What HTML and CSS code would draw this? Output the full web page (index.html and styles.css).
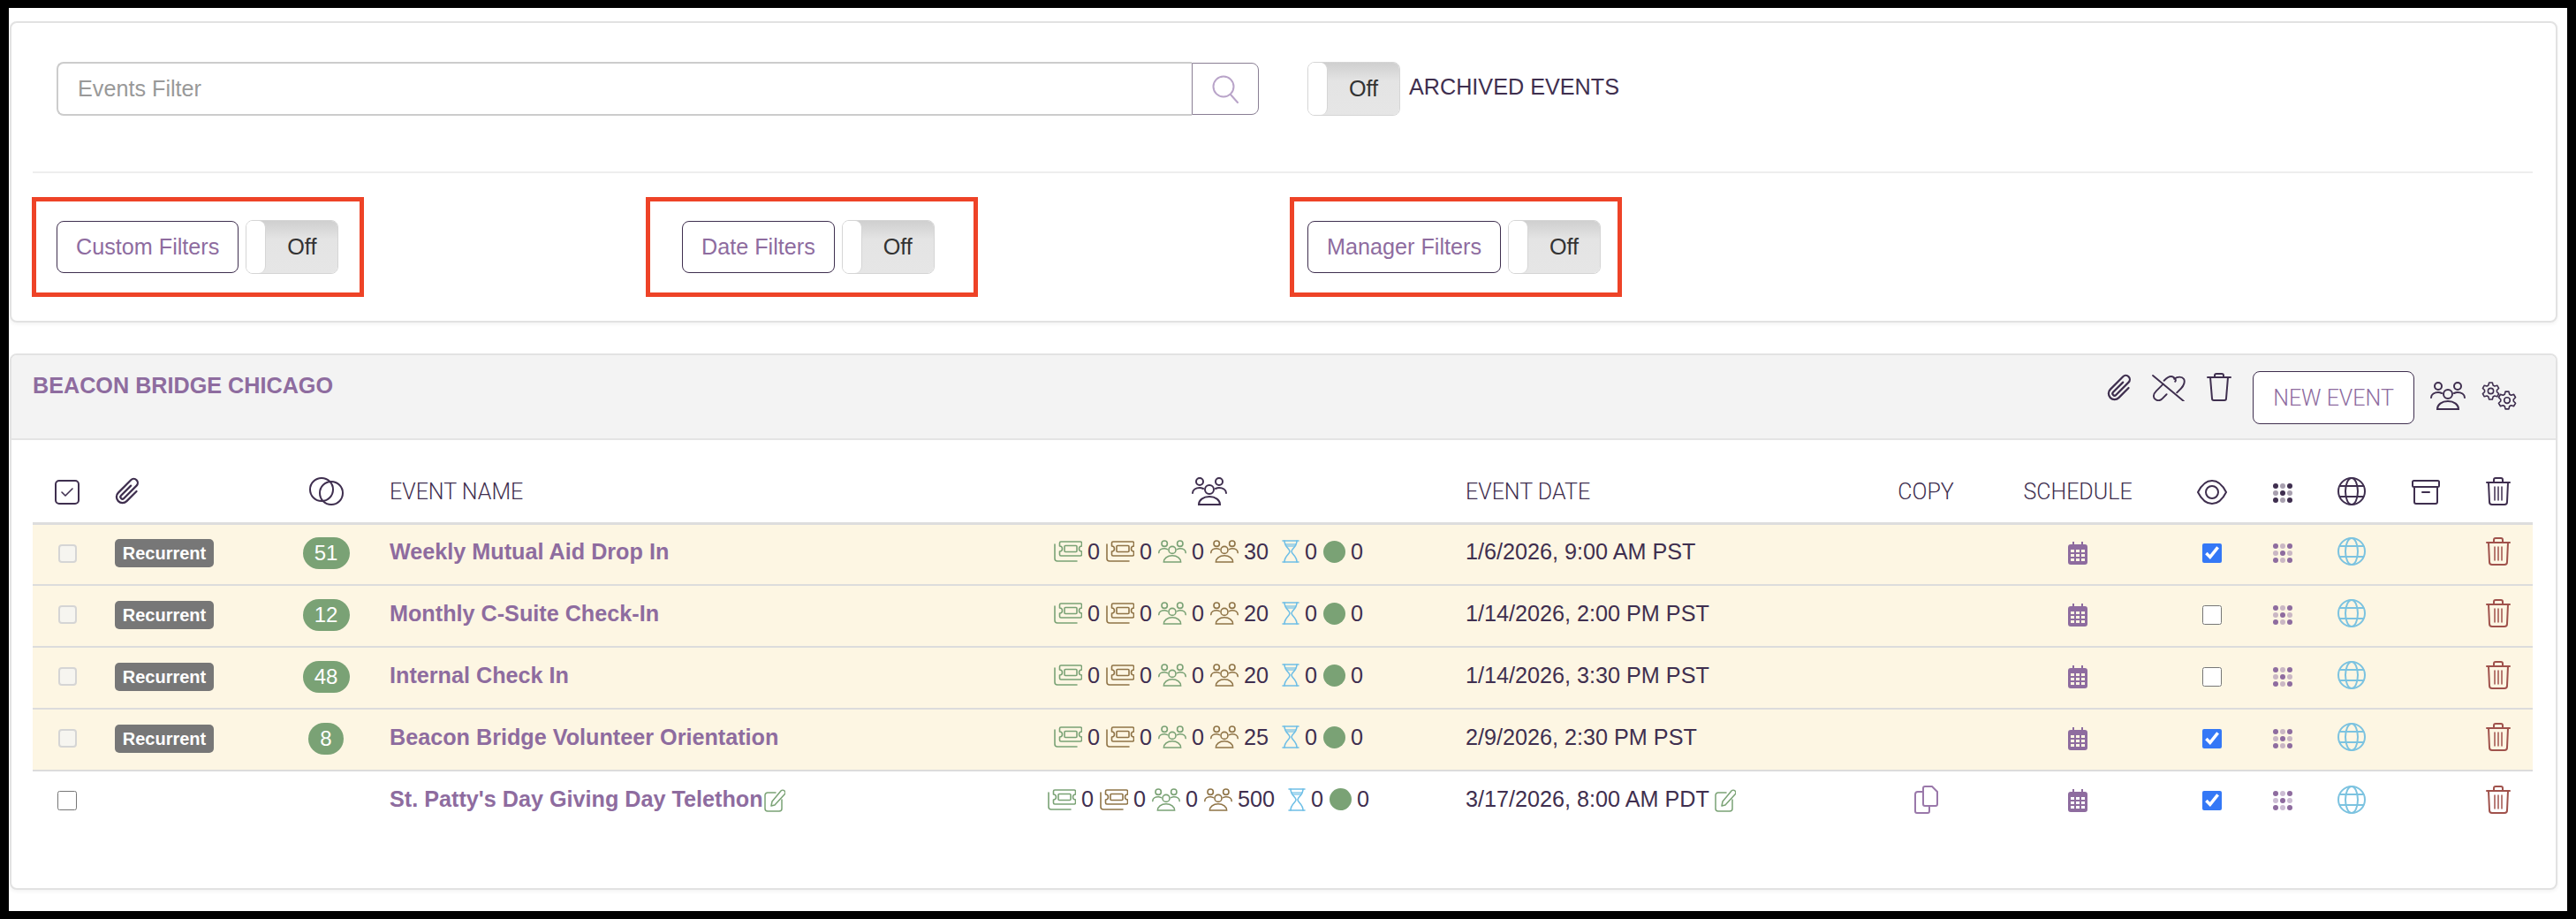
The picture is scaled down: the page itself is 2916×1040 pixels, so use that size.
FILE: index.html
```html
<!DOCTYPE html>
<html lang="en">
  <head>
    <meta charset="UTF-8" />
    <title>Events</title>
    <link rel="stylesheet" href="styles.css">
  </head>
  <body>
    <!-- icon sprite -->
    <svg class="sprite" xmlns="http://www.w3.org/2000/svg">
      <symbol id="i-clip" viewBox="0 0 16 16">
        <path fill="currentColor" transform="rotate(45 8 8)" d="M4.5 3a2.5 2.5 0 0 1 5 0v9a1.5 1.5 0 0 1-3 0V5a.5.5 0 0 1 1 0v7a.5.5 0 0 0 1 0V3a1.5 1.5 0 1 0-3 0v9a2.5 2.5 0 0 0 5 0V5a.5.5 0 0 1 1 0v7a3.5 3.5 0 1 1-7 0z"/>
      </symbol>
      <symbol id="i-unlink" viewBox="0 0 40 32">
        <g fill="none" stroke="currentColor" stroke-width="2" stroke-linecap="round">
          <path d="M2 2l36 30"/>
          <path d="M14 12l-8 8c-4 4-4 8-1 10s6 1 8-1l5-5"/>
          <path d="M15 8c4-4 8-6 11-4s3 4 2 5"/>
          <path d="M27 6c4-3 9-3 11 0s0 8-3 11l-5 5"/>
        </g>
      </symbol>
      <symbol id="i-trash-plain" viewBox="0 0 28 32">
        <g fill="none" stroke="currentColor" stroke-width="2" stroke-linejoin="round" stroke-linecap="round">
          <path d="M1 5h26"/>
          <path d="M9 5V3a2 2 0 0 1 2-2h6a2 2 0 0 1 2 2v2"/>
          <path d="M4 5l2 24a2 2 0 0 0 2 2h12a2 2 0 0 0 2-2l2-24"/>
        </g>
      </symbol>
      <symbol id="i-trash" viewBox="0 0 28 32">
        <g fill="none" stroke="currentColor" stroke-width="2" stroke-linejoin="round" stroke-linecap="round">
          <path d="M1 6h26"/>
          <path d="M9 6V3a2 2 0 0 1 2-2h6a2 2 0 0 1 2 2v3"/>
          <path d="M3 6l1 22a3 3 0 0 0 3 3h14a3 3 0 0 0 3-3l1-22"/>
          <path d="M10 11v15M14 11v15M18 11v15" stroke-width="1.5"/>
        </g>
      </symbol>
      <symbol id="i-group" viewBox="0 0 40 32">
        <g fill="none" stroke="currentColor" stroke-width="2" stroke-linecap="round">
          <circle cx="9" cy="5" r="4"/>
          <circle cx="31" cy="5" r="4"/>
          <circle cx="20" cy="14" r="5"/>
          <path d="M1 18c0-4 4-6 8-6 2 0 3 .5 4 1"/>
          <path d="M39 18c0-4-4-6-8-6-2 0-3 .5-4 1"/>
          <path d="M8 31c0-5 5-9 12-9s12 4 12 9z"/>
        </g>
      </symbol>
      <symbol id="i-gear" viewBox="0 0 24 24">
        <polygon fill="none" stroke="currentColor" stroke-width="1.8" stroke-linejoin="round" points="9,4.58 9.9,1.2 14.1,1.2 15,4.58 16.93,5.69 20.3,4.78 22.4,8.42 19.93,10.89 19.93,13.11 22.4,15.58 20.3,19.22 16.93,18.31 15,19.42 14.1,22.8 9.9,22.8 9,19.42 7.07,18.31 3.7,19.22 1.6,15.58 4.07,13.11 4.07,10.89 1.6,8.42 3.7,4.78 7.07,5.69"/>
        <circle cx="12" cy="12" r="3.6" fill="none" stroke="currentColor" stroke-width="1.8"/>
      </symbol>
      <symbol id="i-gears" viewBox="0 0 40 32">
        <use href="#i-gear" x="0" y="0" width="21" height="21"/>
        <use href="#i-gear" x="18" y="10" width="22" height="22"/>
      </symbol>
      <symbol id="i-check-square" viewBox="0 0 28 28">
        <rect x="1" y="1" width="26" height="26" rx="4" fill="none" stroke="currentColor" stroke-width="2"/>
        <path d="M8 14l4 4 8-8" fill="none" stroke="currentColor" stroke-width="1.6" stroke-linecap="round" stroke-linejoin="round"/>
      </symbol>
      <symbol id="i-circles" viewBox="0 0 39 32">
        <g fill="none" stroke="currentColor" stroke-width="2">
          <circle cx="14" cy="14" r="13"/>
          <circle cx="25" cy="18" r="13"/>
        </g>
      </symbol>
      <symbol id="i-eye" viewBox="0 0 34 28">
        <g fill="none" stroke="currentColor" stroke-width="2">
          <path d="M1 14C5 6 11 1 17 1s12 5 16 13c-4 8-10 13-16 13S5 22 1 14z"/>
          <circle cx="17" cy="14" r="7"/>
        </g>
      </symbol>
      <symbol id="i-dots" viewBox="0 0 22 22">
        <g fill="currentColor">
          <circle cx="3" cy="3" r="3"/><circle cx="19" cy="3" r="3"/>
          <circle cx="11" cy="11" r="3"/>
          <circle cx="3" cy="19" r="3"/><circle cx="19" cy="19" r="3"/>
          <g opacity=".45">
            <circle cx="11" cy="3" r="3"/><circle cx="3" cy="11" r="3"/>
            <circle cx="19" cy="11" r="3"/><circle cx="11" cy="19" r="3"/>
          </g>
        </g>
      </symbol>
      <symbol id="i-globe" viewBox="0 0 32 32">
        <g fill="none" stroke="currentColor" stroke-width="2">
          <circle cx="16" cy="16" r="15"/>
          <ellipse cx="16" cy="16" rx="7" ry="15"/>
          <path d="M2.5 10h27M2.5 22h27"/>
        </g>
      </symbol>
      <symbol id="i-archive" viewBox="0 0 32 28">
        <g fill="none" stroke="currentColor" stroke-width="2" stroke-linecap="round" stroke-linejoin="round">
          <rect x="1" y="1" width="30" height="7" rx="1.5"/>
          <path d="M3 8v17a2 2 0 0 0 2 2h22a2 2 0 0 0 2-2V8"/>
          <path d="M12 14h8"/>
        </g>
      </symbol>
      <symbol id="i-ticket" viewBox="0 0 32 24">
        <g fill="none" stroke="currentColor" stroke-width="1.6" stroke-linejoin="round" stroke-linecap="round">
          <path d="M8 1h22a1.5 1.5 0 0 1 1.5 1.500V6a3 3 0 0 0 0 6v3.500A1.500 1.500 0 0 1 30 17H8a1.500 1.500 0 0 1-1.500-1.500V12a3 3 0 0 0 0-6V2.500A1.500 1.500 0 0 1 8 1z"/>
          <rect x="12" y="5.500" width="14" height="7" rx="1"/>
          <path d="M1 4v16a3 3 0 0 0 3 3h22"/>
        </g>
      </symbol>
      <symbol id="i-hourglass" viewBox="0 0 20 26">
        <path d="M3.500 4h13c-.5 2-2 3-3 4h-7c-1-1-2.500-2-3-4z" fill="currentColor" opacity=".6"/>
        <g fill="none" stroke="currentColor" stroke-width="1.6" stroke-linecap="round">
          <path d="M1 1h18M1 25h18"/>
          <path d="M3 1c0 7 6 9 6 12s-6 5-6 12"/>
          <path d="M17 1c0 7-6 9-6 12s6 5 6 12"/>
        </g>
      </symbol>
      <symbol id="i-calendar" viewBox="0 0 22 26">
        <path fill="currentColor" fill-rule="evenodd" d="M5 0h2v3h8V0h2v3h2a3 3 0 0 1 3 3v17a3 3 0 0 1-3 3H3a3 3 0 0 1-3-3V6a3 3 0 0 1 3-3h2zM3 9v3h4V9zm6 0v3h4V9zm6 0v3h4V9zM3 14v3h4v-3zm6 0v3h4v-3zm6 0v3h4v-3zM3 19v3h4v-3zm6 0v3h4v-3zm6 0v3h4v-3z"/>
      </symbol>
      <symbol id="i-edit" viewBox="0 0 24 26">
        <g fill="none" stroke="currentColor" stroke-width="1.500" stroke-linejoin="round" stroke-linecap="round">
          <path d="M13 4H4a3 3 0 0 0-3 3v15a3 3 0 0 0 3 3h13a3 3 0 0 0 3-3V12"/>
          <path d="M8 19l1-5L19 2c1-1 3-1 4 0s1 3 0 4L12 18z"/>
        </g>
      </symbol>
      <symbol id="i-copy" viewBox="0 0 27 32">
        <g fill="none" stroke="currentColor" stroke-width="2" stroke-linejoin="round">
          <path d="M10 3a2 2 0 0 1 2-2h8l6 6v14a2 2 0 0 1-2 2H12a2 2 0 0 1-2-2z"/>
          <path d="M10 7H4a3 3 0 0 0-3 3v19a2 2 0 0 0 2 2h12a2 2 0 0 0 2-2v-6"/>
        </g>
      </symbol>
      <symbol id="i-search" viewBox="0 0 30 32">
        <g fill="none" stroke="currentColor" stroke-width="2" stroke-linecap="round">
          <circle cx="13" cy="13" r="11.500"/>
          <path d="M21 22l8 9"/>
        </g>
      </symbol>
    </svg>

    <div class="frame">
      <section class="card filters">
        <div class="search-row">
          <div class="search-box">
            <input type="text" class="search-input" placeholder="Events Filter" />
            <button type="button" class="btn-search"><svg class="icon-search"><use href="#i-search"/></svg></button>
          </div>
          <div class="switch">
            <span class="switch-handle"></span>
            <span class="switch-label">Off</span>
          </div>
          <span class="archived-label">ARCHIVED EVENTS</span>
        </div>

        <div class="filter-row">
          <div class="filter-box filter-custom">
            <button type="button" class="btn btn-filter">Custom Filters</button>
            <div class="switch">
              <span class="switch-handle"></span>
              <span class="switch-label">Off</span>
            </div>
          </div>
          <div class="filter-box filter-date">
            <button type="button" class="btn btn-filter">Date Filters</button>
            <div class="switch">
              <span class="switch-handle"></span>
              <span class="switch-label">Off</span>
            </div>
          </div>
          <div class="filter-box filter-manager">
            <button type="button" class="btn btn-filter">Manager Filters</button>
            <div class="switch">
              <span class="switch-handle"></span>
              <span class="switch-label">Off</span>
            </div>
          </div>
        </div>
      </section>

      <section class="card events">
        <header class="events-head">
          <h2 class="events-title">BEACON BRIDGE CHICAGO</h2>
          <div class="events-tools">
            <svg class="tool-clip"><use href="#i-clip"/></svg>
            <svg class="tool-unlink"><use href="#i-unlink"/></svg>
            <svg class="tool-trash"><use href="#i-trash-plain"/></svg>
            <button type="button" class="btn btn-new">NEW EVENT</button>
            <svg class="tool-group"><use href="#i-group"/></svg>
            <svg class="tool-gears"><use href="#i-gears"/></svg>
          </div>
        </header>

        <table class="events-table">
          <thead>
            <tr>
              <th class="col-check"><svg class="ic-28"><use href="#i-check-square"/></svg></th>
              <th class="col-clip"><svg class="ic-clip"><use href="#i-clip"/></svg></th>
              <th class="col-count"><svg class="ic-circles"><use href="#i-circles"/></svg></th>
              <th class="col-name">EVENT NAME</th>
              <th class="col-stats"><svg class="ic-group"><use href="#i-group"/></svg></th>
              <th class="col-date">EVENT DATE</th>
              <th class="col-copy">COPY</th>
              <th class="col-schedule">SCHEDULE</th>
              <th class="col-eye"><svg class="ic-eye"><use href="#i-eye"/></svg></th>
              <th class="col-dots"><svg class="ic-dots"><use href="#i-dots"/></svg></th>
              <th class="col-globe"><svg class="ic-globe"><use href="#i-globe"/></svg></th>
              <th class="col-archive"><svg class="ic-archive"><use href="#i-archive"/></svg></th>
              <th class="col-trash"><svg class="ic-trash"><use href="#i-trash"/></svg></th>
            </tr>
          </thead>
          <tbody>
            <tr class="row-recurrent">
              <td class="col-check"><input type="checkbox" class="check-muted" disabled /></td>
              <td class="col-clip"><span class="badge">Recurrent</span></td>
              <td class="col-count"><span class="pill pill-wide">51</span></td>
              <td class="col-name"><a class="event-link">Weekly Mutual Aid Drop In</a></td>
              <td class="col-stats">
                <div class="stats">
                  <svg class="st-ticket green"><use href="#i-ticket"/></svg><span>0</span>
                  <svg class="st-ticket brown"><use href="#i-ticket"/></svg><span>0</span>
                  <svg class="st-group green"><use href="#i-group"/></svg><span>0</span>
                  <svg class="st-group brown"><use href="#i-group"/></svg><span>30</span>
                  <svg class="st-hourglass"><use href="#i-hourglass"/></svg><span>0</span>
                  <i class="st-dot"></i><span>0</span>
                </div>
              </td>
              <td class="col-date">1/6/2026, 9:00 AM PST</td>
              <td class="col-copy"></td>
              <td class="col-schedule"><svg class="ic-calendar"><use href="#i-calendar"/></svg></td>
              <td class="col-eye"><input type="checkbox" class="check" checked /></td>
              <td class="col-dots"><svg class="ic-dots purple"><use href="#i-dots"/></svg></td>
              <td class="col-globe"><svg class="ic-globe sky"><use href="#i-globe"/></svg></td>
              <td class="col-archive"></td>
              <td class="col-trash"><svg class="ic-trash red"><use href="#i-trash"/></svg></td>
            </tr>
            <tr class="row-recurrent">
              <td class="col-check"><input type="checkbox" class="check-muted" disabled /></td>
              <td class="col-clip"><span class="badge">Recurrent</span></td>
              <td class="col-count"><span class="pill pill-wide">12</span></td>
              <td class="col-name"><a class="event-link">Monthly C-Suite Check-In</a></td>
              <td class="col-stats">
                <div class="stats">
                  <svg class="st-ticket green"><use href="#i-ticket"/></svg><span>0</span>
                  <svg class="st-ticket brown"><use href="#i-ticket"/></svg><span>0</span>
                  <svg class="st-group green"><use href="#i-group"/></svg><span>0</span>
                  <svg class="st-group brown"><use href="#i-group"/></svg><span>20</span>
                  <svg class="st-hourglass"><use href="#i-hourglass"/></svg><span>0</span>
                  <i class="st-dot"></i><span>0</span>
                </div>
              </td>
              <td class="col-date">1/14/2026, 2:00 PM PST</td>
              <td class="col-copy"></td>
              <td class="col-schedule"><svg class="ic-calendar"><use href="#i-calendar"/></svg></td>
              <td class="col-eye"><input type="checkbox" class="check" /></td>
              <td class="col-dots"><svg class="ic-dots purple"><use href="#i-dots"/></svg></td>
              <td class="col-globe"><svg class="ic-globe sky"><use href="#i-globe"/></svg></td>
              <td class="col-archive"></td>
              <td class="col-trash"><svg class="ic-trash red"><use href="#i-trash"/></svg></td>
            </tr>
            <tr class="row-recurrent">
              <td class="col-check"><input type="checkbox" class="check-muted" disabled /></td>
              <td class="col-clip"><span class="badge">Recurrent</span></td>
              <td class="col-count"><span class="pill pill-wide">48</span></td>
              <td class="col-name"><a class="event-link">Internal Check In</a></td>
              <td class="col-stats">
                <div class="stats">
                  <svg class="st-ticket green"><use href="#i-ticket"/></svg><span>0</span>
                  <svg class="st-ticket brown"><use href="#i-ticket"/></svg><span>0</span>
                  <svg class="st-group green"><use href="#i-group"/></svg><span>0</span>
                  <svg class="st-group brown"><use href="#i-group"/></svg><span>20</span>
                  <svg class="st-hourglass"><use href="#i-hourglass"/></svg><span>0</span>
                  <i class="st-dot"></i><span>0</span>
                </div>
              </td>
              <td class="col-date">1/14/2026, 3:30 PM PST</td>
              <td class="col-copy"></td>
              <td class="col-schedule"><svg class="ic-calendar"><use href="#i-calendar"/></svg></td>
              <td class="col-eye"><input type="checkbox" class="check" /></td>
              <td class="col-dots"><svg class="ic-dots purple"><use href="#i-dots"/></svg></td>
              <td class="col-globe"><svg class="ic-globe sky"><use href="#i-globe"/></svg></td>
              <td class="col-archive"></td>
              <td class="col-trash"><svg class="ic-trash red"><use href="#i-trash"/></svg></td>
            </tr>
            <tr class="row-recurrent">
              <td class="col-check"><input type="checkbox" class="check-muted" disabled /></td>
              <td class="col-clip"><span class="badge">Recurrent</span></td>
              <td class="col-count"><span class="pill">8</span></td>
              <td class="col-name"><a class="event-link">Beacon Bridge Volunteer Orientation</a></td>
              <td class="col-stats">
                <div class="stats">
                  <svg class="st-ticket green"><use href="#i-ticket"/></svg><span>0</span>
                  <svg class="st-ticket brown"><use href="#i-ticket"/></svg><span>0</span>
                  <svg class="st-group green"><use href="#i-group"/></svg><span>0</span>
                  <svg class="st-group brown"><use href="#i-group"/></svg><span>25</span>
                  <svg class="st-hourglass"><use href="#i-hourglass"/></svg><span>0</span>
                  <i class="st-dot"></i><span>0</span>
                </div>
              </td>
              <td class="col-date">2/9/2026, 2:30 PM PST</td>
              <td class="col-copy"></td>
              <td class="col-schedule"><svg class="ic-calendar"><use href="#i-calendar"/></svg></td>
              <td class="col-eye"><input type="checkbox" class="check" checked /></td>
              <td class="col-dots"><svg class="ic-dots purple"><use href="#i-dots"/></svg></td>
              <td class="col-globe"><svg class="ic-globe sky"><use href="#i-globe"/></svg></td>
              <td class="col-archive"></td>
              <td class="col-trash"><svg class="ic-trash red"><use href="#i-trash"/></svg></td>
            </tr>
            <tr>
              <td class="col-check"><input type="checkbox" class="check" /></td>
              <td class="col-clip"></td>
              <td class="col-count"></td>
              <td class="col-name"><a class="event-link">St. Patty's Day Giving Day Telethon</a><svg class="ic-edit"><use href="#i-edit"/></svg></td>
              <td class="col-stats">
                <div class="stats">
                  <svg class="st-ticket green"><use href="#i-ticket"/></svg><span>0</span>
                  <svg class="st-ticket brown"><use href="#i-ticket"/></svg><span>0</span>
                  <svg class="st-group green"><use href="#i-group"/></svg><span>0</span>
                  <svg class="st-group brown"><use href="#i-group"/></svg><span>500</span>
                  <svg class="st-hourglass"><use href="#i-hourglass"/></svg><span>0</span>
                  <i class="st-dot"></i><span>0</span>
                </div>
              </td>
              <td class="col-date">3/17/2026, 8:00 AM PDT<svg class="ic-edit"><use href="#i-edit"/></svg></td>
              <td class="col-copy"><svg class="ic-copy"><use href="#i-copy"/></svg></td>
              <td class="col-schedule"><svg class="ic-calendar"><use href="#i-calendar"/></svg></td>
              <td class="col-eye"><input type="checkbox" class="check" checked /></td>
              <td class="col-dots"><svg class="ic-dots purple"><use href="#i-dots"/></svg></td>
              <td class="col-globe"><svg class="ic-globe sky"><use href="#i-globe"/></svg></td>
              <td class="col-archive"></td>
              <td class="col-trash"><svg class="ic-trash red"><use href="#i-trash"/></svg></td>
            </tr>
          </tbody>
        </table>
      </section>
    </div>
  </body>
</html>
```

FILE: styles.css
```css
* {
  box-sizing: border-box;
}

html,
body {
  margin: 0;
  padding: 0;
}

body {
  background: #000;
  color: #3f2f4f;
  font-family: "Liberation Sans", Arial, sans-serif;
  font-size: 25.2px;
  padding: 9px 10px;
}

.sprite {
  position: absolute;
  width: 0;
  height: 0;
}

.frame {
  background: #fff;
  height: 1022px;
  padding: 15px 11px 0 1px;
}

.card {
  background: #fff;
  border: 2px solid #e2e2e2;
  border-radius: 8px;
  box-shadow: 0 2px 4px rgba(0, 0, 0, 0.05);
}

/* filter card */
.filters {
  height: 341px;
  padding: 44px 26px 0 24px;
}

.search-row {
  display: flex;
  align-items: flex-start;
  padding: 0 0 63px 27px;
  border-bottom: 2px solid #eee;
}

.search-box {
  display: flex;
  width: 1361px;
  margin-right: 55px;
}

.search-input {
  width: 1285px;
  height: 61px;
  padding: 0 22px;
  border: 2px solid #ccc;
  border-right: 0;
  border-radius: 8px 0 0 8px;
  font-family: inherit;
  font-size: 25.2px;
  color: #3f2f4f;
}

.search-input::placeholder {
  color: #999;
}

.btn-search {
  width: 76px;
  height: 59px;
  margin-top: 1px;
  padding: 0;
  background: #fff;
  border: 1px solid #8a7f94;
  border-radius: 0 8px 8px 0;
}

.icon-search {
  display: block;
  width: 30px;
  height: 32px;
  margin: 0 auto;
  color: #b9a4c9;
}

.switch {
  display: flex;
  width: 105px;
  height: 61px;
  border: 1px solid #d5d5d5;
  border-radius: 8px;
  overflow: hidden;
  flex: none;
}

.switch-handle {
  width: 22px;
  background: #fff;
  border-right: 1px solid #d5d5d5;
  border-radius: 0 8px 8px 0;
  position: relative;
  z-index: 1;
  margin-right: -6px;
}

.switch-label {
  flex: 1;
  display: flex;
  align-items: center;
  justify-content: center;
  padding-left: 6px;
  color: #333;
  background: linear-gradient(#cfcfcf, #e4e4e4 35%, #e6e6e6);
}

.archived-label {
  margin: 13px 0 0 10px;
  line-height: 30px;
}

.filter-row {
  display: flex;
  padding-top: 27px;
  margin-left: -1px;
}

.filter-box {
  display: flex;
  align-items: center;
  gap: 8px;
  width: 376px;
  height: 113px;
  border: 5px solid #ee4327;
}

.filter-custom {
  padding-left: 23px;
}

.filter-date {
  margin-left: 319px;
  padding-left: 36px;
}

.filter-manager {
  margin-left: 353px;
  padding-left: 15px;
}

.btn {
  background: #fff;
  border: 1px solid #3f2f4f;
  border-radius: 8px;
  color: #8e6c9f;
  font-family: inherit;
}

.btn-filter {
  height: 59px;
  padding: 0 21px;
  font-size: 25.2px;
}

/* events card */
.events {
  height: 607px;
  margin-top: 35px;
  overflow: hidden;
}

.events-head {
  display: flex;
  justify-content: space-between;
  height: 96px;
  padding: 19px 44px 0 24px;
  background: #f3f3f3;
  border-bottom: 2px solid #e4e4e4;
}

.events-title {
  margin: 0;
  color: #8e6c9f;
  font-size: 25.2px;
  font-weight: bold;
  line-height: 30px;
}

.events-tools {
  display: flex;
  align-items: flex-start;
  color: #3f2f4f;
}

.tool-clip {
  width: 36px;
  height: 36px;
  margin: 0 17px 0 0;
}

.tool-unlink {
  width: 39px;
  height: 31px;
  margin: 2px 24px 0 0;
}

.tool-trash {
  width: 28px;
  height: 32px;
  margin: 1px 24px 0 0;
}

.btn-new {
  width: 183px;
  height: 60px;
  margin: -1px 18px 0 0;
  padding: 0;
  font-family: Roboto, sans-serif;
  font-size: 25px;
  font-weight: 300;
}

.tool-group {
  width: 40px;
  height: 32px;
  margin: 11px 18px 0 0;
}

.tool-gears {
  width: 40px;
  height: 32px;
  margin-top: 11px;
}

.events-table {
  width: 2830px;
  margin: 24px 0 0 24px;
  border-collapse: collapse;
  table-layout: fixed;
}

.events-table th {
  height: 70px;
  padding: 0;
  border-bottom: 3px solid #ddd;
  font-family: Roboto, sans-serif;
  font-size: 25px;
  font-weight: 300;
  text-align: center;
}

.events-table td {
  height: 70px;
  padding: 0 0 6px;
  border-bottom: 2px solid #dcdcdc;
  text-align: center;
}

.events-table tr:last-child td {
  border-bottom: 0;
}

.events-table svg {
  vertical-align: middle;
}

.row-recurrent {
  background: #fdf6e3;
}

.col-check { width: 78px; }
.col-clip { width: 192px; }
.col-count { width: 124px; }
.col-name { width: 657px; }
.col-stats { width: 561px; }
.col-date { width: 468px; }
.col-copy { width: 126px; }
.col-schedule { width: 218px; }
.col-eye { width: 86px; }
.col-dots { width: 74px; }
.col-globe { width: 82px; }
.col-archive { width: 86px; }
.col-trash { width: 78px; }

.events-table .col-clip {
  padding-left: 15px;
  text-align: left;
}

.events-table td.col-clip,
.events-table td.col-count {
  padding-bottom: 2px;
}

.events-table .col-name,
.events-table .col-date {
  padding-left: 10px;
  text-align: left;
}

.ic-28 { width: 28px; height: 28px; }
.ic-clip { width: 36px; height: 36px; margin-left: -3px; }
.ic-circles { width: 39px; height: 32px; }
.ic-group { width: 40px; height: 32px; }
.ic-eye { width: 34px; height: 28px; }
.ic-dots { width: 22px; height: 22px; }
.ic-globe { width: 32px; height: 32px; }
.ic-archive { width: 32px; height: 28px; }
.ic-trash { width: 28px; height: 32px; }
.ic-calendar { width: 22px; height: 26px; color: #8e6c9f; }
.ic-copy { width: 27px; height: 32px; color: #9a78aa; }
.ic-edit { width: 24px; height: 26px; margin-left: 1px; color: #7aa275; }
.col-date .ic-edit { margin-left: 6px; }

.purple { color: #8e6c9f; }
.sky { color: #7cc3e0; }
.red { color: #a0524c; }
.green { color: #7aa275; }
.brown { color: #8f7447; }

.badge {
  display: inline-block;
  width: 112px;
  height: 32px;
  background: #777;
  border-radius: 5px;
  color: #fff;
  font-size: 20px;
  font-weight: bold;
  line-height: 32px;
  text-align: center;
}

.pill {
  display: inline-block;
  min-width: 40px;
  height: 36px;
  padding: 0 10px;
  background: #7aa275;
  border-radius: 18px;
  color: #fff;
  font-size: 24px;
  line-height: 36px;
}

.pill-wide {
  min-width: 53px;
}

.event-link {
  color: #8e6c9f;
  font-weight: bold;
}

.stats {
  display: flex;
  align-items: center;
  justify-content: center;
  gap: 6px;
}

.stats span {
  margin-right: 1px;
}

.st-ticket {
  width: 32px;
  height: 24px;
}

.st-group {
  width: 32px;
  height: 26px;
}

.st-hourglass {
  width: 20px;
  height: 26px;
  margin-left: 8px;
  color: #6fbfe6;
}

.st-dot {
  width: 25px;
  height: 25px;
  background: #7aa275;
  border-radius: 50%;
}

.check {
  width: 22px;
  height: 22px;
  margin: 0;
  vertical-align: middle;
  accent-color: #3478f6;
}

.check-muted {
  appearance: none;
  width: 21px;
  height: 21px;
  margin: 0;
  vertical-align: middle;
  background: #f6f5f0;
  border: 2px solid #d5d5d5;
  border-radius: 4px;
}
```
